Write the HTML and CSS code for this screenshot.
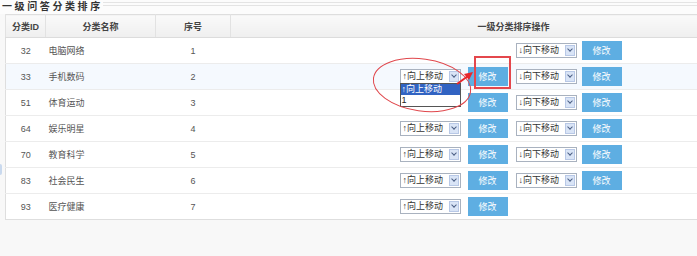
FILE: index.html
```html
<!doctype html>
<html lang="zh-CN">

<head>
    <meta charset="utf-8">
    <meta name="viewport" content="width=device-width, initial-scale=1">
    <title>一级问答分类排序</title>

    <link rel="stylesheet" href="styles.css">
</head>

<body>
    <div class="page">
        <div class="title_bar">
            <h2>一级问答分类排序</h2>
            <span class="title_line"></span>
        </div>

        <table class="sort_table">
            <colgroup>
                <col class="col_id">
                <col class="col_name">
                <col class="col_order">
                <col class="col_ops">
            </colgroup>
            <thead>
                <tr>
                    <th>分类ID</th>
                    <th>分类名称</th>
                    <th>序号</th>
                    <th class="ops_head">一级分类排序操作</th>
                </tr>
            </thead>
            <tbody>
                <tr>
                    <td class="cell_id">32</td>
                    <td class="cell_name">电脑网络</td>
                    <td class="cell_order">1</td>
                    <td class="cell_ops">
                        <div class="ops">
                            <div class="op_group"></div>
                            <div class="op_group">
                                <span class="fake_select down"><span class="sel_text">↓向下移动</span><span class="sel_arrow"></span></span>
                                <button class="edit_btn">修改</button>
                            </div>
                        </div>
                    </td>
                </tr>
                <tr class="hover_row">
                    <td class="cell_id">33</td>
                    <td class="cell_name">手机数码</td>
                    <td class="cell_order">2</td>
                    <td class="cell_ops">
                        <div class="ops">
                            <div class="op_group">
                                <span class="fake_select up open">
                                    <span class="sel_text">↑向上移动</span><span class="sel_arrow"></span>
                                    <span class="sel_list">
                                        <span class="sel_item active">↑向上移动</span>
                                        <span class="sel_item">1</span>
                                    </span>
                                </span>
                                <button class="edit_btn">修改</button>
                            </div>
                            <div class="op_group">
                                <span class="fake_select down"><span class="sel_text">↓向下移动</span><span class="sel_arrow"></span></span>
                                <button class="edit_btn">修改</button>
                            </div>
                        </div>
                    </td>
                </tr>
                <tr>
                    <td class="cell_id">51</td>
                    <td class="cell_name">体育运动</td>
                    <td class="cell_order">3</td>
                    <td class="cell_ops">
                        <div class="ops">
                            <div class="op_group">
                                <!-- hidden behind the open list above -->
                                <span class="fake_select up covered"><span class="sel_text">↑向上移动</span><span class="sel_arrow"></span></span>
                                <button class="edit_btn">修改</button>
                            </div>
                            <div class="op_group">
                                <span class="fake_select down"><span class="sel_text">↓向下移动</span><span class="sel_arrow"></span></span>
                                <button class="edit_btn">修改</button>
                            </div>
                        </div>
                    </td>
                </tr>
                <tr>
                    <td class="cell_id">64</td>
                    <td class="cell_name">娱乐明星</td>
                    <td class="cell_order">4</td>
                    <td class="cell_ops">
                        <div class="ops">
                            <div class="op_group">
                                <span class="fake_select up"><span class="sel_text">↑向上移动</span><span class="sel_arrow"></span></span>
                                <button class="edit_btn">修改</button>
                            </div>
                            <div class="op_group">
                                <span class="fake_select down"><span class="sel_text">↓向下移动</span><span class="sel_arrow"></span></span>
                                <button class="edit_btn">修改</button>
                            </div>
                        </div>
                    </td>
                </tr>
                <tr>
                    <td class="cell_id">70</td>
                    <td class="cell_name">教育科学</td>
                    <td class="cell_order">5</td>
                    <td class="cell_ops">
                        <div class="ops">
                            <div class="op_group">
                                <span class="fake_select up"><span class="sel_text">↑向上移动</span><span class="sel_arrow"></span></span>
                                <button class="edit_btn">修改</button>
                            </div>
                            <div class="op_group">
                                <span class="fake_select down"><span class="sel_text">↓向下移动</span><span class="sel_arrow"></span></span>
                                <button class="edit_btn">修改</button>
                            </div>
                        </div>
                    </td>
                </tr>
                <tr>
                    <td class="cell_id">83</td>
                    <td class="cell_name">社会民生</td>
                    <td class="cell_order">6</td>
                    <td class="cell_ops">
                        <div class="ops">
                            <div class="op_group">
                                <span class="fake_select up"><span class="sel_text">↑向上移动</span><span class="sel_arrow"></span></span>
                                <button class="edit_btn">修改</button>
                            </div>
                            <div class="op_group">
                                <span class="fake_select down"><span class="sel_text">↓向下移动</span><span class="sel_arrow"></span></span>
                                <button class="edit_btn">修改</button>
                            </div>
                        </div>
                    </td>
                </tr>
                <tr>
                    <td class="cell_id">93</td>
                    <td class="cell_name">医疗健康</td>
                    <td class="cell_order">7</td>
                    <td class="cell_ops">
                        <div class="ops">
                            <div class="op_group">
                                <span class="fake_select up"><span class="sel_text">↑向上移动</span><span class="sel_arrow"></span></span>
                                <button class="edit_btn">修改</button>
                            </div>
                            <div class="op_group"></div>
                        </div>
                    </td>
                </tr>
            </tbody>
        </table>

        <span class="side_tab"></span>

        <!-- red annotation marks drawn over the table -->
        <svg class="marks" width="697" height="256" viewBox="0 0 697 256">
            <ellipse cx="422" cy="85" rx="49" ry="26" transform="rotate(8 422 85)" fill="none" stroke="#e0474c" stroke-width="1"/>
            <line x1="457" y1="84" x2="468" y2="76" stroke="#e8262b" stroke-width="2"/>
            <polygon points="473,72 464,74 469,80" fill="#e8262b"/>
            <rect x="475" y="57" width="35" height="31" fill="none" stroke="#e4474c" stroke-width="1.2" shape-rendering="crispEdges"/>
        </svg>
    </div>
</body>

</html>
```

FILE: styles.css
```css
/* Category sort page */
body {
    margin: 0;
    background-color: #f8f8f8;
    font-family: "Liberation Sans", "Noto Sans CJK SC", sans-serif;
    font-size: 9px;
    color: #555;
    overflow: hidden;
}

.page {
    position: relative;
    width: 697px;
    height: 256px;
}

.title_bar {
    display: flex;
    align-items: flex-start;
    height: 14px;
    background-color: #fcfcfc;
}

.title_bar h2 {
    margin: 1px 0 0 2px;
    font-size: 10px;
    line-height: 11px;
    font-weight: bold;
    letter-spacing: 2.6px;
    color: #333;
}

.title_line {
    flex: 1;
    height: 2px;
    margin-top: 2px;
    border-top: 1px solid #e4e4e4;
    border-bottom: 1px solid #e4e4e4;
}

.sort_table {
    margin-left: 5px;
    width: 792px;
    table-layout: fixed;
    border-collapse: collapse;
    background-color: #fff;
    border: 1px solid #dedede;
}

.col_id {
    width: 40px;
}

.col_name {
    width: 110px;
}

.col_order {
    width: 75px;
}

.sort_table th {
    height: 22px;
    padding: 0;
    font-weight: bold;
    color: #444;
    background: linear-gradient(#fafafa, #efefef);
    border-left: 1px solid #e2e2e2;
    border-bottom: 1px solid #dcdcdc;
    text-align: center;
}

.sort_table td {
    height: 25px;
    padding: 0;
    border-top: 1px solid #ececec;
}

.hover_row td {
    background-color: #f5f9fe;
}

.cell_id {
    text-align: center;
}

.cell_name {
    padding-left: 3px !important;
}

.cell_order {
    text-align: center;
}

.ops {
    display: flex;
    padding-left: 169px;
}

.op_group {
    display: flex;
    align-items: center;
    width: 116px;
}

.fake_select {
    position: relative;
    display: flex;
    align-items: center;
    justify-content: space-between;
    box-sizing: border-box;
    width: 61px;
    height: 15px;
    padding: 0 1px 0 2px;
    background-color: #fff;
    border: 1px solid #a9b2bf;
    color: #333;
    font-size: 9px;
    line-height: 13px;
}

.fake_select.down {
    margin-right: 5px;
}

.fake_select.up {
    margin-right: 7px;
}

.fake_select.covered {
    visibility: hidden;
}

.sel_text {
    white-space: nowrap;
}

.sel_arrow {
    position: relative;
    width: 10px;
    height: 11px;
    background-color: #d9e4f6;
    border: 1px solid #b8c8e6;
    box-sizing: border-box;
}

.sel_arrow::after {
    content: "";
    position: absolute;
    left: 2px;
    top: 1px;
    width: 3px;
    height: 3px;
    border-right: 1.5px solid #4b5f84;
    border-bottom: 1.5px solid #4b5f84;
    transform: rotate(45deg);
}

.sel_list {
    position: absolute;
    left: -1px;
    top: 13px;
    z-index: 2;
    display: flex;
    flex-direction: column;
    box-sizing: border-box;
    width: 61px;
    background-color: #fff;
    border: 1px solid #555;
}

.sel_item {
    height: 11px;
    line-height: 11px;
    padding-left: 1px;
    color: #222;
}

.sel_item.active {
    background-color: #3163c2;
    color: #fff;
}

.edit_btn {
    width: 40px;
    height: 19px;
    padding: 0;
    border: none;
    background-color: #5eaee2;
    color: #fff;
    font-family: "Liberation Sans", "Noto Sans CJK SC", sans-serif;
    font-size: 9px;
    cursor: pointer;
}

.side_tab {
    position: absolute;
    left: 0;
    top: 164px;
    width: 2px;
    height: 11px;
    background-color: #c9d9ee;
    border-radius: 0 2px 2px 0;
}

.marks {
    position: absolute;
    left: 0;
    top: 0;
    pointer-events: none;
    z-index: 3;
}
```
